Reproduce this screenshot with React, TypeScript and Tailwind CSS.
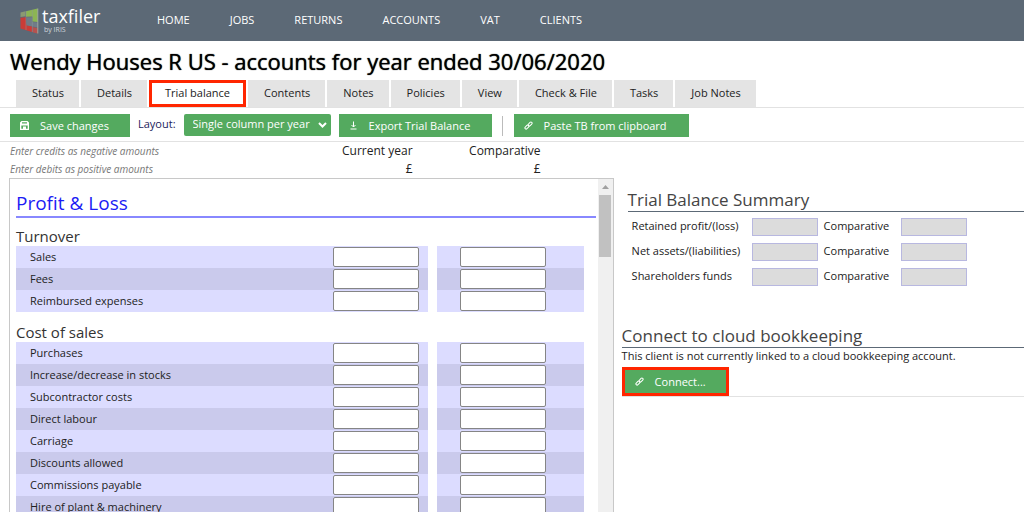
import { useState } from "react";

interface Section {
  title: string;
  rows: string[];
}

const navItems = ["Home", "Jobs", "Returns", "Accounts", "VAT", "Clients"];

const tabs = [
  "Status",
  "Details",
  "Trial balance",
  "Contents",
  "Notes",
  "Policies",
  "View",
  "Check & File",
  "Tasks",
  "Job Notes",
];

const sections: Section[] = [
  { title: "Turnover", rows: ["Sales", "Fees", "Reimbursed expenses"] },
  {
    title: "Cost of sales",
    rows: [
      "Purchases",
      "Increase/decrease in stocks",
      "Subcontractor costs",
      "Direct labour",
      "Carriage",
      "Discounts allowed",
      "Commissions payable",
      "Hire of plant & machinery",
    ],
  },
];

const summaryRows = ["Retained profit/(loss)", "Net assets/(liabilities)", "Shareholders funds"];

function Logo() {
  return (
    <a href="#" aria-label="taxfiler by IRIS" className="flex w-[137px] items-center gap-[3px] text-white">
      <svg width="19" height="26" viewBox="0 0 19 26" aria-hidden="true">
        <path d="M0.500 4.500 5.500 3.300V8.300L0.500 9Z" fill="#8a9a72" />
        <path d="M6 3.200 17.500 0.500V14L12.500 13.500V8.500L6 8.800Z" fill="#8cb554" />
        <path d="M6.500 9.300H12V14L17.500 14.600V19.500L12 18.500 6.500 17.500Z" fill="#707c88" />
        <path d="M0.500 9.800 6 9.200V14.500L6.500 17.500 12 18.500V24L0.500 20.500Z" fill="#c93c38" />
        <path d="M12.500 19 17.500 20V25.500L12.500 24.200Z" fill="#b5524f" />
        <path d="M6 3V22M12.300 2V24" stroke="#8c979b" strokeWidth="0.500" />
        <path d="M17.800 0.500V25.500" stroke="#c4cfb8" strokeWidth="0.600" />
      </svg>
      <span className="flex flex-col">
        <span className="text-[18px] leading-[19px]">taxfiler</span>
        <span className="pl-[2px] text-[7px] leading-[8px] text-gray-300">by IRIS</span>
      </span>
    </a>
  );
}

function SaveIcon() {
  return (
    <svg width="9" height="9" viewBox="0 0 9 9" fill="white" fillRule="evenodd" aria-hidden="true">
      <path d="M1.500 0H7.500L9 1.500V9H0V1.500ZM2 1.300V2.600H7V1.300ZM1.300 4.500V7.700H3V5.500H6V7.700H7.700V4.500Z" />
    </svg>
  );
}

function DownloadIcon() {
  return (
    <svg width="9" height="9" viewBox="0 0 9 9" fill="none" stroke="white" aria-hidden="true">
      <path d="M4.500 0.500V6M2.500 4 4.500 6 6.500 4M1.500 8H7.500" />
    </svg>
  );
}

function LinkIcon() {
  return (
    <svg width="9" height="9" viewBox="0 0 9 9" fill="none" stroke="white" aria-hidden="true">
      <rect x="3.800" y="1.900" width="4.600" height="2.400" rx="1.200" transform="rotate(-45 6.100 3.100)" />
      <rect x="0.600" y="4.900" width="4.600" height="2.400" rx="1.200" transform="rotate(-45 2.900 6.100)" />
    </svg>
  );
}

interface ActionButtonProps {
  icon: React.ReactNode;
  label: string;
  className?: string;
}

function ActionButton({ icon, label, className = "" }: ActionButtonProps) {
  return (
    <button
      type="button"
      className={`flex items-center bg-[#54aa5f] pl-[10px] text-left text-[11px] text-white hover:bg-[#489a53] ${className}`}
    >
      {icon}
      <span className="pt-px pl-[11px]">{label}</span>
    </button>
  );
}

function AmountInput({ label }: { label: string }) {
  return (
    <input
      type="text"
      aria-label={label}
      className="block h-5 w-[86px] rounded-[2px] border border-[#858585] bg-white px-1 text-right text-[11px]"
    />
  );
}

function AccountSection({ title, rows }: Section) {
  return (
    <section className="pb-[2px]">
      <h3 className="pt-2 text-[15px] leading-5 text-[#333]">{title}</h3>
      <table className="w-full border-collapse text-[11px] text-[#222]">
        <tbody>
          {rows.map((row, i) => {
            const bg = i % 2 === 0 ? "bg-[#dcdcff]" : "bg-[#cacaec]";
            return (
              <tr key={row} className="h-[22px]">
                <th scope="row" className={`p-0 pl-[14px] text-left font-normal ${bg}`}>
                  {row}
                </th>
                <td className={`w-[95px] p-0 ${bg}`}>
                  <AmountInput label={`${row} current year`} />
                </td>
                <td className="w-[9px] p-0" />
                <td className={`w-[147px] p-0 pl-[23px] ${bg}`}>
                  <AmountInput label={`${row} comparative`} />
                </td>
              </tr>
            );
          })}
        </tbody>
      </table>
    </section>
  );
}

export default function App() {
  const [active, setActive] = useState("Trial balance");

  return (
    <div className="flex h-screen flex-col overflow-hidden bg-white font-['Open_Sans',sans-serif] text-[#222]">
      <header className="flex h-[41px] shrink-0 items-center bg-[#5c6976] pl-5">
        <Logo />
        <nav className="flex gap-10 text-[11px] text-white uppercase">
          {navItems.map((item) => (
            <a key={item} href="#" className="hover:underline">
              {item}
            </a>
          ))}
        </nav>
      </header>

      <h1 className="shrink-0 pt-1 pb-[2px] pl-[10px] text-[22px] leading-[33px] text-black [text-shadow:0_0_1px_#000]">
        Wendy Houses R US - accounts for year ended 30/06/2020
      </h1>

      <div className="flex h-7 shrink-0 gap-[2px] border-b border-[#e2e2e2] pl-4">
        {tabs.map((tab) => (
          <button
            key={tab}
            type="button"
            onClick={() => setActive(tab)}
            className={`text-[11px] ${
              tab === active ? "border-[3px] border-[#ff2600] bg-white px-[13px]" : "bg-[#e4e4e4] pr-[15px] pl-4"
            }`}
          >
            {tab}
          </button>
        ))}
      </div>

      <div className="flex h-[34px] shrink-0 items-center border-b border-[#e2e2e2] pt-[2px] pl-[10px]">
        <ActionButton icon={<SaveIcon />} label="Save changes" className="h-[23px] w-[120px]" />
        <label htmlFor="layout" className="pr-2 pb-[2px] pl-2 text-[11px] text-[#1c1c5c]">
          Layout:
        </label>
        <div className="relative pb-[2px]">
          <select
            id="layout"
            className="block h-[22px] w-[147px] appearance-none rounded-[2px] bg-[#54aa5f] pl-[9px] text-[11px] text-white"
          >
            <option>Single column per year</option>
          </select>
          <svg
            width="9"
            height="6"
            viewBox="0 0 9 6"
            fill="none"
            stroke="white"
            strokeWidth="2"
            className="pointer-events-none absolute top-2 right-1"
            aria-hidden="true"
          >
            <path d="M1 1 4.500 4.500 8 1" />
          </svg>
        </div>
        <ActionButton icon={<DownloadIcon />} label="Export Trial Balance" className="ml-2 h-[23px] w-[153px]" />
        <span className="mr-[11px] ml-[10px] h-5 w-px bg-[#bbb]" />
        <ActionButton icon={<LinkIcon />} label="Paste TB from clipboard" className="h-[23px] w-[175px]" />
      </div>

      <main className="grid min-h-0 flex-1 grid-cols-[3fr_2fr] gap-2 pl-[10px]">
        <div className="flex min-h-0 flex-col">
          <div className="flex shrink-0 pr-[73px] text-[12px] leading-[18px]">
            <div className="flex-1 text-[10px] text-[#777] italic">
              <p>Enter credits as negative amounts</p>
              <p>Enter debits as positive amounts</p>
            </div>
            <div className="w-[128px] text-right">
              <p>Current year</p>
              <p>£</p>
            </div>
            <div className="w-[128px] text-right">
              <p>Comparative</p>
              <p>£</p>
            </div>
          </div>

          <div className="-ml-px flex min-h-0 flex-1 border border-b-0 border-[#c8c8c8]">
            <div className="min-w-0 flex-1 overflow-hidden pr-[2px] pl-[6px]">
              <h2 className="border-b-2 border-[#8888ff] pt-3 text-[19px] leading-[25px] text-[#1c1cf4]">
                Profit &amp; Loss
              </h2>
              <div className="pr-3">
                {sections.map((section) => (
                  <AccountSection key={section.title} {...section} />
                ))}
              </div>
            </div>
            <div className="flex w-[15px] flex-col items-center bg-[#f0f0f0] pt-[6px]" aria-hidden="true">
              <svg width="7" height="4" viewBox="0 0 7 4">
                <path d="M0 4 3.500 0 7 4Z" fill="#a0a0a0" />
              </svg>
              <div className="mt-[6px] h-[62px] w-3 bg-[#c1c1c1]" />
            </div>
          </div>
        </div>

        <aside className="pt-[47px]">
          <section className="pl-[6px]">
            <h2 className="border-b border-[#5c6976] text-[17px] leading-[22px] text-[#444]">Trial Balance Summary</h2>
            <div className="flex flex-col gap-[7px] pt-[6px] pl-1 text-[11px]">
              {summaryRows.map((row) => (
                <div key={row} className="flex h-[18px]">
                  <label htmlFor={row} className="w-[120px]">
                    {row}
                  </label>
                  <input id={row} readOnly className="h-[18px] w-[66px] border border-[#b8b8e0] bg-[#dcdcdc]" />
                  <label htmlFor={`${row}-comparative`} className="w-[83px] pl-[6px]">
                    Comparative
                  </label>
                  <input
                    id={`${row}-comparative`}
                    readOnly
                    className="h-[18px] w-[66px] border border-[#b8b8e0] bg-[#dcdcdc]"
                  />
                </div>
              ))}
            </div>
          </section>

          <section className="border-b border-[#e2e2e2] pt-[39px]">
            <h2 className="border-b border-[#5c6976] text-[17px] leading-[22px] text-[#444]">
              Connect to cloud bookkeeping
            </h2>
            <p className="text-[11px] leading-4">This client is not currently linked to a cloud bookkeeping account.</p>
            <ActionButton
              icon={<LinkIcon />}
              label="Connect..."
              className="mt-[3px] h-[29px] w-[107px] border-[3px] border-[#ff2600]"
            />
          </section>
        </aside>
      </main>
    </div>
  );
}
